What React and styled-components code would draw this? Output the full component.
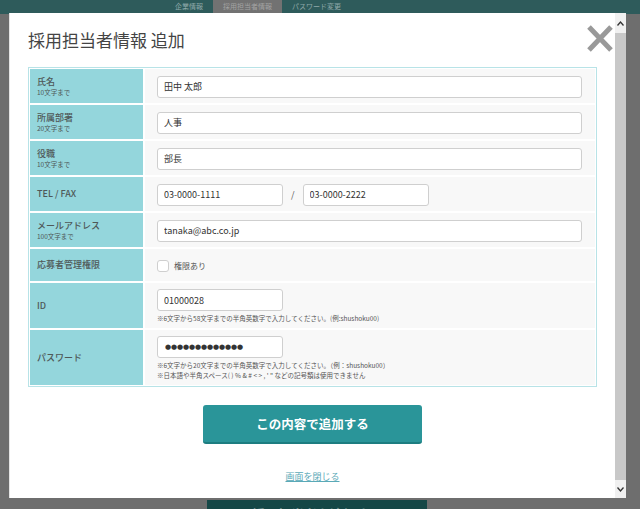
import React from "react";
import styled, { createGlobalStyle } from "styled-components";

const GlobalStyle = createGlobalStyle`
    html, body {
        margin: 0;
        padding: 0;
        background: #6e6e6e;
        font-family: "Noto Sans CJK JP", "Noto Sans", sans-serif;
        overflow: hidden;
    }
    * {
        box-sizing: border-box;
    }
`;

const Page = styled.div`
    width: 640px;
    height: 509px;
    background: #6e6e6e;
    position: relative;
    overflow: hidden;
`;

const Nav = styled.nav`
    height: 14px;
    background: #2e5b5b;
    display: flex;
    padding-left: 165px;
`;

const NavTab = styled.div`
    height: 13px;
    padding: 0 10px;
    font-size: 7px;
    line-height: 12px;
    color: ${(props) => (props.active ? "#a3a3a3" : "#8fa9a9")};
    background: ${(props) => (props.active ? "#727272" : "transparent")};
`;

const PageMain = styled.main`
    display: flex;
    justify-content: center;
    padding: 486px 6px 0 0;
`;

const PageButton = styled.div`
    width: 220px;
    height: 40px;
    background: #154746;
    color: #6d8c8c;
    font-size: 13px;
    font-weight: 700;
    text-align: center;
    padding-top: 4px;
`;

const Modal = styled.div`
    position: absolute;
    top: 13px;
    left: 9px;
    width: 617px;
    height: 485px;
    background: #fff;
    border-left: 1px solid #e4e4e4;
    display: flex;
`;

const ModalBody = styled.div`
    flex: 1;
    padding: 17px 18px 0 18px;
    display: flex;
    flex-direction: column;
`;

const Title = styled.h2`
    margin: 0 0 17px;
    height: 20px;
    font-size: 17px;
    line-height: 20px;
    font-weight: 400;
    color: #444;
`;

const CloseButton = styled.button`
    position: absolute;
    top: 12px;
    right: 13px;
    width: 26px;
    height: 27px;
    padding: 0;
    border: none;
    background: transparent;
    cursor: pointer;
`;

const Scrollbar = styled.div`
    width: 11px;
    background: #f0f0f0;
    display: flex;
    flex-direction: column;
`;

const ScrollArrow = styled.div`
    height: ${(props) => props.h}px;
    display: flex;
    align-items: center;
    justify-content: center;
`;

const ScrollThumb = styled.div`
    flex: 1;
    background: #c8c8c8;
`;

const FormTable = styled.div`
    border: 1px solid #b8e3e7;
    padding: 1px;
    display: grid;
    grid-template-columns: 113px 1fr;
    gap: 2px;
    background: #fff;
`;

const LabelCell = styled.div`
    background: #94d6dc;
    padding: 0 7px;
    display: flex;
    flex-direction: column;
    justify-content: center;
    min-height: ${(props) => props.h || 34}px;
    color: #4f5858;
`;

const LabelText = styled.div`
    font-size: 9px;
    line-height: 12px;
    font-weight: 500;
`;

const SubText = styled.div`
    font-size: 6.5px;
    line-height: 9px;
`;

const ValueCell = styled.div`
    background: #f8f8f8;
    padding: 6px 13px 5px 12px;
    display: flex;
    flex-direction: column;
    justify-content: center;
`;

const Input = styled.input`
    display: block;
    width: ${(props) => (props.short ? "126px" : "100%")};
    height: 22px;
    border: 1px solid #cfcfcf;
    border-radius: 3px;
    background: #fff;
    padding: 0 6px;
    font-family: "Noto Sans CJK JP", "Noto Sans", sans-serif;
    font-size: 9px;
    color: #333;
    outline: none;
`;

const PasswordInput = styled(Input)`
    font-family: "DejaVu Sans", sans-serif;
    font-size: 7px;
    letter-spacing: -0.1px;
    padding-left: 7px;
    color: #333;
`;

const PhoneRow = styled.div`
    display: flex;
    align-items: center;
    gap: 8px;
    font-size: 9px;
    color: #555;
`;

const CheckRow = styled.label`
    display: flex;
    align-items: center;
    gap: 5px;
    font-size: 8px;
    color: #555;
`;

const CheckBox = styled.span`
    width: 12px;
    height: 12px;
    border: 1px solid #cfcfcf;
    border-radius: 3px;
    background: #fff;
`;

const Note = styled.div`
    font-size: 6.5px;
    line-height: 10px;
    color: #555;
    white-space: nowrap;
    &:first-of-type {
        margin-top: 2px;
    }
`;

const Actions = styled.div`
    display: flex;
    flex-direction: column;
    align-items: center;
    padding-top: 18px;
`;

const SubmitButton = styled.button`
    width: 219px;
    height: 39px;
    border: none;
    border-bottom: 2px solid #1d7d80;
    border-radius: 3px;
    background: #2a9599;
    color: #fff;
    font-family: "Noto Sans CJK JP", "Noto Sans", sans-serif;
    font-size: 12.5px;
    font-weight: 700;
    cursor: pointer;
`;

const CloseLink = styled.a`
    margin-top: 26px;
    font-size: 9px;
    color: #5aa9b7;
    text-decoration: underline;
`;

const Chevron = ({ up }) => (
    <svg width="7" height="5" viewBox="0 0 7 5">
        <path
            d={up ? "M0.5 4.5 L3.5 1 L6.5 4.5" : "M0.5 0.5 L3.5 4 L6.5 0.5"}
            fill="none"
            stroke="#333"
            strokeWidth="1.3"
        />
    </svg>
);

const rows = [
    { label: "氏名", sub: "10文字まで", value: "田中 太郎" },
    { label: "所属部署", sub: "20文字まで", value: "人事" },
    { label: "役職", sub: "10文字まで", value: "部長" },
];

const App = () => {
    return (
        <Page>
            <GlobalStyle />
            <Nav>
                <NavTab>企業情報</NavTab>
                <NavTab active>採用担当者情報</NavTab>
                <NavTab>パスワード変更</NavTab>
            </Nav>
            <PageMain>
                <PageButton>採用担当者を追加する</PageButton>
            </PageMain>

            <Modal>
                <ModalBody>
                    <Title>採用担当者情報 追加</Title>
                    <FormTable>
                        {rows.map((row) => (
                            <React.Fragment key={row.label}>
                                <LabelCell>
                                    <LabelText>{row.label}</LabelText>
                                    <SubText>{row.sub}</SubText>
                                </LabelCell>
                                <ValueCell>
                                    <Input defaultValue={row.value} />
                                </ValueCell>
                            </React.Fragment>
                        ))}

                        <LabelCell>
                            <LabelText>TEL / FAX</LabelText>
                        </LabelCell>
                        <ValueCell>
                            <PhoneRow>
                                <Input short defaultValue="03-0000-1111" />
                                <span>/</span>
                                <Input short defaultValue="03-0000-2222" />
                            </PhoneRow>
                        </ValueCell>

                        <LabelCell>
                            <LabelText>メールアドレス</LabelText>
                            <SubText>100文字まで</SubText>
                        </LabelCell>
                        <ValueCell>
                            <Input defaultValue="tanaka@abc.co.jp" />
                        </ValueCell>

                        <LabelCell h={32}>
                            <LabelText>応募者管理権限</LabelText>
                        </LabelCell>
                        <ValueCell>
                            <CheckRow>
                                <CheckBox />
                                権限あり
                            </CheckRow>
                        </ValueCell>

                        <LabelCell h={45}>
                            <LabelText>ID</LabelText>
                        </LabelCell>
                        <ValueCell>
                            <Input short defaultValue="01000028" />
                            <Note>
                                ※6文字から58文字までの半角英数字で入力してください。(例:shushoku00)
                            </Note>
                        </ValueCell>

                        <LabelCell h={55}>
                            <LabelText>パスワード</LabelText>
                        </LabelCell>
                        <ValueCell>
                            <PasswordInput short defaultValue="●●●●●●●●●●●●●" />
                            <Note>
                                ※6文字から20文字までの半角英数字で入力してください。（例：shushoku00）
                            </Note>
                            <Note>
                                ※日本語や半角スペース( ) % &amp; # &lt; &gt; , ' " などの記号類は使用できません
                            </Note>
                        </ValueCell>
                    </FormTable>

                    <Actions>
                        <SubmitButton>この内容で追加する</SubmitButton>
                        <CloseLink>画面を閉じる</CloseLink>
                    </Actions>
                </ModalBody>

                <Scrollbar>
                    <ScrollArrow h={20}>
                        <Chevron up />
                    </ScrollArrow>
                    <ScrollThumb />
                    <ScrollArrow h={18}>
                        <Chevron />
                    </ScrollArrow>
                </Scrollbar>

                <CloseButton aria-label="閉じる">
                    <svg width="26" height="27" viewBox="0 0 26 27">
                        <path d="M2 2 L24 25 M24 2 L2 25" stroke="#999" strokeWidth="5" />
                    </svg>
                </CloseButton>
            </Modal>
        </Page>
    );
};

export default App;
